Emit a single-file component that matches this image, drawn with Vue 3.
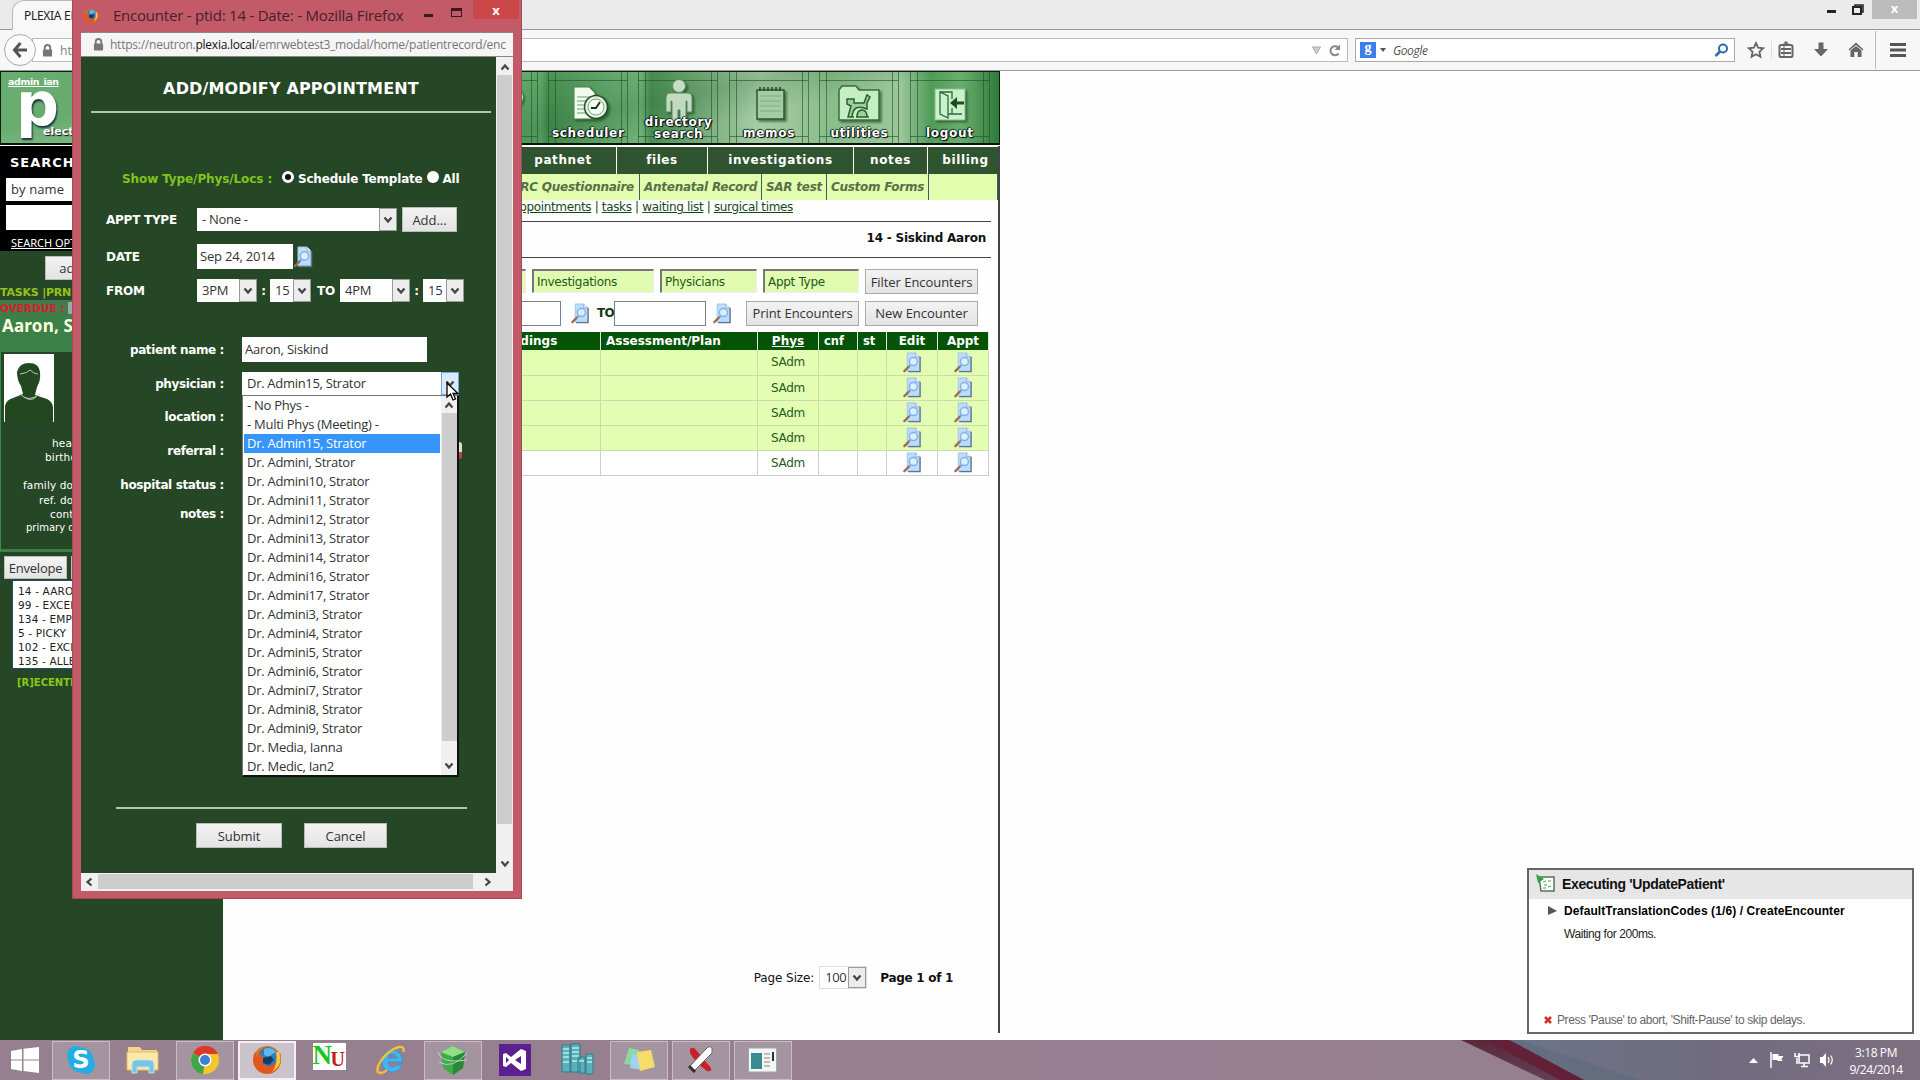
<script setup>
const physicians = [
  '- No Phys -', '- Multi Phys (Meeting) -', 'Dr. Admin15, Strator', 'Dr. Admini, Strator',
  'Dr. Admini10, Strator', 'Dr. Admini11, Strator', 'Dr. Admini12, Strator', 'Dr. Admini13, Strator',
  'Dr. Admini14, Strator', 'Dr. Admini16, Strator', 'Dr. Admini17, Strator', 'Dr. Admini3, Strator',
  'Dr. Admini4, Strator', 'Dr. Admini5, Strator', 'Dr. Admini6, Strator', 'Dr. Admini7, Strator',
  'Dr. Admini8, Strator', 'Dr. Admini9, Strator', 'Dr. Media, Ianna', 'Dr. Medic, Ian2',
]
const patients = ['14 - AARON', '99 - EXCEL', '134 - EMPTY', '5 - PICKY', '102 - EXCEL', '135 - ALLER']
const encounters = [1, 2, 3, 4, 5]
</script>

<template>
  <div class="desktop">
    <svg class="defs" width="0" height="0" aria-hidden="true">
      <symbol id="lookup" viewBox="0 0 20 22">
        <path d="M5 1h9l4 4v15H5z" fill="#bcdcfa" stroke="#a5c4e6" />
        <path d="M14 1v4h4" fill="#f4faff" stroke="#8eadd6" />
        <path d="M18.500 5v15.500H6" fill="none" stroke="#5d7396" stroke-width="1.400" />
        <circle cx="11.500" cy="10" r="4.200" fill="#d8f2fc" stroke="#86aeea" stroke-width="1.500" />
        <path d="M8 14l-2 2" stroke="#7b8fb8" stroke-width="2.200" />
        <path d="M6 16l-4 4" stroke="#a06a4c" stroke-width="2.400" stroke-linecap="round" />
      </symbol>
      <symbol id="chev" viewBox="0 0 10 8">
        <path d="M1.500 1.500L5 5.500l3.500-4" fill="none" stroke="#444" stroke-width="2.200" />
      </symbol>
      <symbol id="lock" viewBox="0 0 12 14">
        <path d="M3 7V4a3 3 0 0 1 6 0v3" fill="none" stroke="#777" stroke-width="2" />
        <rect x="1" y="6" width="10" height="7.500" rx="1" fill="#777" />
      </symbol>
      <symbol id="fox" viewBox="0 0 32 32">
        <circle cx="16" cy="16" r="14" fill="#e8701a" />
        <circle cx="17" cy="13" r="10" fill="#2f7fc0" />
        <path d="M13 5q7-3 12 3l-4 2-3 3-5-2z" fill="#63b6e4" />
        <path d="M29 8q4 15-8 21-12 3-18-8-2-7 1-13l2 5 4-4q0 4 4 5l-3 3q2 6 8 5 8-2 10-14z" fill="#e0561c" />
        <path d="M28 8q5 13-7 20 6-8 4-20z" fill="#f9c53c" />
        <path d="M12 14l8-2 3 4-5 5-6-2z" fill="#163c64" />
      </symbol>
    </svg>

    <!-- main browser window -->
    <div class="browser">
      <div class="tabstrip">
        <div class="tab">PLEXIA EMR</div>
        <div class="winctl">
          <i class="wmin"></i>
          <svg width="12" height="11" viewBox="0 0 12 11"><path d="M3 2.500V1h8v7H9.500" fill="none" stroke="#222" stroke-width="1.500" /><rect x="1" y="3" width="8" height="7" fill="none" stroke="#222" stroke-width="2" /></svg>
          <b>x</b>
        </div>
      </div>
      <div class="toolbar">
        <div class="back">
          <svg width="16" height="16" viewBox="0 0 16 16"><path d="M8.500 1L2.500 8l6 7M3 8h12" fill="none" stroke="#555" stroke-width="3" /></svg>
        </div>
        <div class="url">
          <svg width="11" height="13"><use href="#lock" /></svg>
          <span>https://neutron</span>
          <svg class="tri" width="9" height="9" viewBox="0 0 9 9"><path d="M.500 1h8L4.500 8z" fill="#ccc" stroke="#aaa" /></svg>
          <svg width="13" height="13" viewBox="0 0 13 13"><path d="M10.500 9.500A4.500 4.500 0 1 1 10 3.300" fill="none" stroke="#888" stroke-width="2" /><path d="M12 .500v5.500H6.500z" fill="#888" /></svg>
        </div>
        <div class="search">
          <i class="gicon">g</i><svg width="6" height="4" viewBox="0 0 6 4"><path d="M0 0h6L3 4z" fill="#555" /></svg>
          <em>Google</em>
          <svg width="15" height="15" viewBox="0 0 15 15"><circle cx="9" cy="5.500" r="4" fill="none" stroke="#2a6aac" stroke-width="2" /><path d="M6 8.500L1.500 13" stroke="#2a6aac" stroke-width="2.500" /></svg>
        </div>
        <div class="tools">
          <svg width="18" height="18" viewBox="0 0 18 18"><path d="M9 2l2.100 4.700 5 .600-3.700 3.500 1 5L9 13.300l-4.400 2.500 1-5L1.900 7.300l5-.600z" fill="none" stroke="#666" stroke-width="1.800" /></svg>
          <i class="thin"></i>
          <svg width="16" height="18" viewBox="0 0 16 18"><rect x="1.500" y="4" width="13" height="12" rx="1.500" fill="none" stroke="#666" stroke-width="2" /><path d="M5 3.500h6M6.500 1.500h3M3 8h10M3 12h10" stroke="#666" stroke-width="1.800" /><path d="M6 5v10" stroke="#666" /></svg>
          <svg width="16" height="18" viewBox="0 0 16 18"><path d="M5.500 1.500h5V8H15l-7 7.500L1 8h4.500z" fill="#666" /></svg>
          <svg width="16" height="18" viewBox="0 0 16 18"><path d="M8 1.500l7.500 7-1 1L8 4 1.500 9.500l-1-1z" fill="#666" /><path d="M2.500 9.500L8 5l5.500 4.500v6.500H9.700v-5H6.300v5H2.500z" fill="#666" /></svg>
          <i class="sep"></i>
          <svg width="18" height="18" viewBox="0 0 18 18"><path d="M1 3.500h16M1 9h16M1 14.500h16" stroke="#555" stroke-width="3.200" /></svg>
        </div>
      </div>

      <div class="page">
        <header class="banner">
          <div class="brand"><u>admin_ian</u><b>p</b><small>electronic</small></div>
          <div class="navtiles">
            <div class="tile"><svg width="70" height="56" viewBox="0 0 70 56"><circle cx="50" cy="18" r="7" fill="none" stroke="#e5f8e5" stroke-width="6" /></svg></div>
            <div class="tile">
              <svg width="70" height="56" viewBox="0 0 70 56">
                <path d="M21 8h15l6 6v26H21z" fill="#effcef" stroke="#507c50" />
                <path d="M24 18h14M24 22h12M24 26h9M24 30h9M24 34h9" stroke="#6d9a6d" />
                <circle cx="43" cy="28" r="11.500" fill="#e0f5e0" stroke="#274c27" stroke-width="1.500" />
                <circle cx="43" cy="28" r="8" fill="#f4fff4" stroke="#7fa67f" /><path d="M47 23l-4 6h-5" fill="none" stroke="#183818" stroke-width="2" />
              </svg>
              <span>scheduler</span>
            </div>
            <div class="tile two">
              <svg width="70" height="56" viewBox="0 0 70 56">
                <circle cx="35" cy="7" r="6.500" fill="#c6dcc4" stroke="#5c8c5c" />
                <path d="M26 14h18q4 0 4 4v15h-5V22h-1v22h-6V31h-2v13h-6V22h-1v11h-5V18q0-4 4-4z" fill="#c3d9c2" stroke="#5c8c5c" />
              </svg>
              <span>directory<br>search</span>
            </div>
            <div class="tile">
              <svg width="70" height="56" viewBox="0 0 70 56">
                <path d="M23 11h27v29H23z" fill="#a5cba5" stroke="#2c592c" stroke-width="1.500" />
                <path d="M26 17h21M26 22h21M26 27h21M26 32h21" stroke="#7fae7f" /><path d="M26 8v4M30 8v4M34 8v4M38 8v4M42 8v4M46 8v4" stroke="#234b23" stroke-width="1.500" />
              </svg>
              <span>memos</span>
            </div>
            <div class="tile">
              <svg width="70" height="56" viewBox="0 0 70 56">
                <path d="M15 11l3-4h14l3 4h20v30H15z" fill="#c6eec6" stroke="#3b6c3b" stroke-width="1.500" />
                <path d="M23 20h7v4h10l3-8 3 2-3 6v6q-14-6-15 8h-4l3-11-4-2zM33 38q0-7 5-7t5 7M24 38h6M32 38h13" fill="#9bcf9b" stroke="#2d5f2d" stroke-width="1.500" />
              </svg>
              <span>utilities</span>
            </div>
            <div class="tile">
              <svg width="70" height="56" viewBox="0 0 70 56">
                <rect x="20" y="10" width="30" height="31" fill="#c9f2ca" stroke="#8abb8a" />
                <path d="M25 13l8 4v22l-8-4zM25 13h12v7M37 29v6h-4M37 35h10" fill="none" stroke="#31663a" stroke-width="1.300" />
                <path d="M49 24h-9" stroke="#214a25" stroke-width="3" /><path d="M42 18v12l-7-6z" fill="#214a25" />
              </svg>
              <span>logout</span>
            </div>
          </div>
        </header>

        <div class="body">
          <aside class="side">
            <div class="finder">
              <h4>SEARCH</h4>
              <div class="fin">by name</div>
              <div class="fin blank"></div>
              <u>SEARCH OPTIONS</u>
            </div>
            <div class="addrow"><span class="btn">add new</span></div>
            <div class="tasks">TASKS |PRN.</div>
            <div class="pt">
              <div class="over">OVERDUE : <i></i></div>
              <div class="ptname">Aaron, Siskind</div>
            </div>
            <div class="card">
              <svg class="photo" width="50" height="68" viewBox="0 0 50 68">
                <rect width="50" height="68" fill="#fff" />
                <path d="M1 68V52q1-6 8-8l10-4-2-8q-4-6-4-14 2-9 12-9t11 9q1 8-3 15l-2 8 9 3q8 2 9 9v15z" fill="#23481f" />
                <path d="M16 20q8-1 10-4 4 4 8 4M16 40q8 9 20 0M20 43q7 5 12 0" fill="none" stroke="#b5c8b2" />
              </svg>
              <div class="f f1">health no. :</div>
              <div class="f f2">birthdate :</div>
              <div class="f f3">family doctor :</div>
              <div class="f f4">ref. doctor :</div>
              <div class="f f5">contact :</div>
              <div class="f f6">primary doc :</div>
            </div>
            <div class="envrow"><span class="btn env">Envelope</span><span class="btn env">Label</span></div>
            <ul class="recent"><li v-for="p in patients" :key="p">{{ p }}</li></ul>
            <div class="rec">[R]ECENTLY</div>
          </aside>

          <main class="main">
            <nav class="menu">
              <span class="m1">pathnet</span><span class="m2">files</span><span class="m3">investigations</span><span class="m4">notes</span><span class="m5">billing</span>
            </nav>
            <nav class="forms">
              <span class="q1">PRC Questionnaire</span><span class="q2">Antenatal Record</span><span class="q3">SAR test</span><span class="q4">Custom Forms</span><span class="q5"></span>
            </nav>
            <div class="links"><u>appointments</u> | <u>tasks</u> | <u>waiting list</u> | <u>surgical times</u></div>
            <div class="who">14 - Siskind Aaron</div>
            <div class="filters">
              <span class="flt fl0"></span>
              <span class="flt fl1">Investigations</span>
              <span class="flt fl2">Physicians</span>
              <span class="flt fl3">Appt Type</span>
              <span class="btn">Filter Encounters</span>
            </div>
            <div class="range">
              <span class="box"></span>
              <svg class="lk a" width="20" height="21"><use href="#lookup" /></svg>
              <b>TO</b><span class="box"></span>
              <svg class="lk b" width="20" height="21"><use href="#lookup" /></svg>
              <span class="btn p">Print Encounters</span>
              <span class="btn">New Encounter</span>
            </div>
            <table class="grid">
              <colgroup><col><col class="c1"><col class="c2"><col class="c3"><col class="c4"><col class="c5"><col class="c6"></colgroup>
              <tbody>
              <tr class="hd"><th class="fd">Findings</th><th class="ap">Assessment/Plan</th><th><u>Phys</u></th><th class="l">cnf</th><th class="l">st</th><th>Edit</th><th>Appt</th></tr>
              <tr v-for="e in encounters" :key="e">
                <td></td><td></td><td>SAdm</td><td></td><td></td>
                <td><svg width="20" height="21"><use href="#lookup" /></svg></td>
                <td><svg width="20" height="21"><use href="#lookup" /></svg></td>
              </tr>
              </tbody>
            </table>
            <div class="pager">Page Size: <span class="sel"><span>100</span><i><svg width="10" height="8"><use href="#chev" /></svg></i></span><b>Page 1 of 1</b></div>
          </main>
        </div>
      </div>
    </div>

    <!-- appointment window -->
    <div class="modal">
      <div class="mtitle">
        <svg width="16" height="16"><use href="#fox" /></svg>
        <span>Encounter - ptid: 14 - Date: - Mozilla Firefox</span>
        <i class="mm"></i><i class="mx"></i><b>x</b>
      </div>
      <div class="murl">
        <svg width="11" height="13"><use href="#lock" /></svg>
        <span>https://neutron.<b>plexia.local</b>/emrwebtest3_modal/home/patientrecord/enc</span>
      </div>
      <div class="mbody">
        <div class="form">
          <h2>ADD/MODIFY APPOINTMENT</h2>
          <div class="show"><em>Show Type/Phys/Locs :</em><i class="radio on"></i><span>Schedule Template</span><i class="radio"></i><span>All</span></div>
          <div class="row r1"><label>APPT TYPE</label><span class="sel w200"><span>- None -</span><i><svg width="10" height="8"><use href="#chev" /></svg></i></span><span class="btn add">Add...</span></div>
          <div class="row r2"><label>DATE</label><span class="inp">Sep 24, 2014</span><svg width="20" height="22"><use href="#lookup" /></svg></div>
          <div class="row r3">
            <label>FROM</label>
            <span class="sel w60"><span>3PM</span><i><svg width="10" height="8"><use href="#chev" /></svg></i></span><b class="colon">:</b>
            <span class="sel w41"><span>15</span><i><svg width="10" height="8"><use href="#chev" /></svg></i></span><b class="to">TO</b>
            <span class="sel w70"><span>4PM</span><i><svg width="10" height="8"><use href="#chev" /></svg></i></span><b class="colon">:</b>
            <span class="sel w41"><span>15</span><i><svg width="10" height="8"><use href="#chev" /></svg></i></span>
          </div>
          <div class="row2 s1"><label>patient name :</label><span class="inp wide">Aaron, Siskind</span></div>
          <div class="row2 s2">
            <label>physician :</label>
            <span class="sel w217"><span>Dr. Admin15, Strator</span><i class="hot"><svg width="10" height="8"><use href="#chev" /></svg></i></span>
            <div class="dropdown">
              <ul><li v-for="(p, n) in physicians" :key="p" :class="{ cur: n === 2 }">{{ p }}</li></ul>
              <div class="dbar"><svg class="up" width="10" height="8"><use href="#chev" /></svg><i></i><svg width="10" height="8"><use href="#chev" /></svg></div>
            </div>
          </div>
          <div class="row2 s3"><label>location :</label></div>
          <div class="row2 s4"><label>referral :</label><i class="edge"></i></div>
          <div class="row2 s5"><label>hospital status :</label></div>
          <div class="row2 s6"><label>notes :</label></div>
          <div class="foot"><span class="btn sub">Submit</span><span class="btn can">Cancel</span></div>
        </div>
        <div class="vbar"><svg class="up" width="10" height="8"><use href="#chev" /></svg><i></i><svg width="10" height="8"><use href="#chev" /></svg></div>
      </div>
      <div class="hbar"><svg class="lf" width="10" height="8"><use href="#chev" /></svg><i></i><svg class="rt" width="10" height="8"><use href="#chev" /></svg></div>
      <svg class="cursor" width="14" height="20" viewBox="0 0 14 20"><path d="M1 1v14l3.500-3L7 18l2.500-1-2.500-5.500h5z" fill="#fff" stroke="#000" stroke-width="1.300" /></svg>
    </div>

    <!-- script runner toast -->
    <div class="toast">
      <div class="th">
        <svg width="20" height="19" viewBox="0 0 20 19"><path d="M3 3h15v14H5z" fill="#f8fff8" stroke="#5d7060" stroke-width="1.500" /><path d="M7 8l3-1M12 7h3M8 11h3M12 13l3-1M7 14h3" stroke="#4aa84f" /><path d="M0 0l8 5-6 4z" fill="#2fa33a" /></svg>
        <b>Executing 'UpdatePatient'</b>
      </div>
      <div class="t1"><svg width="10" height="10" viewBox="0 0 10 10"><path d="M1 0l9 5-9 4z" fill="#555" /></svg><b>DefaultTranslationCodes (1/6) / CreateEncounter</b></div>
      <div class="t2">Waiting for 200ms.</div>
      <div class="t3"><svg width="8" height="8" viewBox="0 0 8 8"><path d="M1 1l6 6M7 1L1 7" stroke="#d0322a" stroke-width="2.600" /></svg><span>Press 'Pause' to abort, 'Shift-Pause' to skip delays.</span></div>
    </div>

    <!-- taskbar -->
    <div class="taskbar">
      <svg class="wall" width="420" height="40" viewBox="0 0 420 40" preserveAspectRatio="none">
        <defs>
          <linearGradient id="sky" x1="0" x2="1"><stop offset="0" stop-color="#6d7489" /><stop offset=".500" stop-color="#706c80" /><stop offset="1" stop-color="#7e6f80" /></linearGradient>
          <linearGradient id="band" x1="0" y1="1" x2=".300" y2="0"><stop offset="0" stop-color="#63485c" /><stop offset="1" stop-color="#5a2638" /></linearGradient>
        </defs>
        <path d="M0 0h420v40H80z" fill="url(#sky)" />
        <path d="M-39 0H10L84 40H45z" fill="url(#band)" />
        <path d="M-15 0H8L84 40H60L10 13z" fill="#642038" />
        <path d="M8 0h12L140 40H84L50 20z" fill="#576978" opacity=".500" />
      </svg>
      <div class="app start"><svg width="28" height="26" viewBox="0 0 28 26"><path d="M0 4l11-2v10.500H0zM12.500 1.700L28 0v12.500H12.500zM0 13.500h11V24L0 22zM12.500 13.500H28V26l-15.500-2z" fill="#fff" /></svg></div>
      <div class="app on"><svg width="32" height="32" viewBox="0 0 32 32"><circle cx="11" cy="11" r="9" fill="#22aee4" /><circle cx="21" cy="21" r="9" fill="#22aee4" /><circle cx="16" cy="16" r="12.500" fill="#22aee4" /><text x="16" y="24" text-anchor="middle" class="skype">S</text></svg></div>
      <div class="app"><svg width="34" height="32" viewBox="0 0 34 32"><path d="M2 3h12l2 3h15v19H2z" fill="#f2d68a" /><path d="M1 8h31v18H1z" fill="#fbe9a9" stroke="#dfbb66" /><path d="M6 20q0-4 4-4h14q4 0 4 4v9h-5v-6H11v6H6z" fill="#79c3e3" stroke="#b8e4f4" /></svg></div>
      <div class="app on"><svg width="30" height="30" viewBox="0 0 30 30"><circle cx="15" cy="15" r="14" fill="#f4c52c" /><path d="M15 15L3 8A14 14 0 0 1 28 9H15z" fill="#d93a2c" /><path d="M15 15l-2 14A14 14 0 0 1 3 8z" fill="#3ea64a" /><circle cx="15" cy="15" r="6.500" fill="#fff" /><circle cx="15" cy="15" r="5" fill="#3b7fd8" /></svg></div>
      <div class="app on lit"><svg width="32" height="32"><use href="#fox" /></svg></div>
      <div class="app"><span class="nu"><b>N</b><i>U</i></span></div>
      <div class="app"><svg width="34" height="34" viewBox="0 0 34 34"><path d="M28.500 19H14q.500 5 4.500 5 2.500 0 3.500-2h6q-2.500 7-10 7-10-1-10-11T18.500 7q10 1 10 12zM14 15h8.500q-.500-4-4-4t-4.500 4z" fill="#45b4ee" fill-rule="evenodd" stroke="#2a8fd0" stroke-width=".700" /><path d="M29.500 9q1.500-6-5-5Q12 8 5 21q-4 9 2 9 3 0 6-3" fill="none" stroke="#f1c03a" stroke-width="2.400" /></svg></div>
      <div class="app on"><svg width="34" height="32" viewBox="0 0 34 32"><path d="M17 2l12 6-2 16-10 7-10-7L5 8z" fill="#3dab48" /><path d="M17 2l12 6-12 5L5 8z" fill="#93dc88" /><path d="M17 13v18l10-7 2-16z" fill="#27893a" /><path d="M2 8q3 12 29 8M3 18q13 8 28-9" fill="none" stroke="#c2d6bf" /></svg></div>
      <div class="app"><svg width="32" height="32" viewBox="0 0 32 32"><rect width="32" height="32" fill="#5c1f8f" /><path d="M22 5l5 2v18l-5 2-10-8-5 4-3-1V10l3-1 5 4zM7 13v6l3-3zM22 12l-6 4 6 4z" fill="#fff" fill-rule="evenodd" /></svg></div>
      <div class="app"><svg width="34" height="34" viewBox="0 0 34 34"><path d="M2 2h8v27H2zM11 1h9v28h-9zM18 14h7v16h-7zM26 11h7v20h-7z" fill="#58b1b8" stroke="#2f7f8a" /><path d="M3 6h6M3 10h6M3 14h6M12 5h7M12 9h7M12 13h7M12 18h5M27 15h5M27 19h5M3 19h6M19 18h5" stroke="#b6ecec" stroke-width="1.500" /></svg></div>
      <div class="app on"><svg width="34" height="30" viewBox="0 0 34 30"><path d="M7 3l10 2-2 15-13-1z" fill="#8fd6a5" /><path d="M10 9l12 2-2 14-12-2z" fill="#9fd3f0" /><path d="M15 7l14-2 4 17-15 4z" fill="#f6dc6a" /></svg></div>
      <div class="app on"><svg width="32" height="32" viewBox="0 0 32 32"><path d="M5 5q3-3 6 1l15 18q1 4-4 3Q10 18 5 9z" fill="#cf1d24" /><path d="M27 4q-3-3-6 1L6 21q-3 4 1 6 3 0 5-3L27 9z" fill="#fff" stroke="#666" /><path d="M4 22l6 6" stroke="#333" stroke-width="3" /></svg></div>
      <div class="app on"><svg width="30" height="26" viewBox="0 0 30 26"><rect x=".500" y="1" width="28" height="24" fill="#f5f5f3" stroke="#9aa" /><rect x="3" y="6" width="11" height="16" fill="#3a8a92" /><path d="M16 7h6M16 11h6M16 15h6M16 19h6" stroke="#aaa" stroke-width="1.500" /><rect x="24" y="5" width="2" height="9" fill="#234" /></svg></div>
      <div class="tray">
        <svg width="9" height="5" viewBox="0 0 9 5"><path d="M0 5h9L4.500 0z" fill="#fff" /></svg>
        <svg class="t-flag" width="14" height="16" viewBox="0 0 14 16"><path d="M1 0v16" stroke="#fff" stroke-width="1.500" /><path d="M2.500 2h6v2h5l-2 3 1 2h-5V8h-5z" fill="#fff" /></svg>
        <svg class="t-net" width="17" height="16" viewBox="0 0 17 16"><rect x="5" y="3" width="10" height="8" fill="none" stroke="#fff" stroke-width="1.500" /><path d="M7 14.500h7M10 11v3M3 6v6M1 1v3.500h4V1" fill="none" stroke="#fff" stroke-width="1.500" /></svg>
        <svg class="t-vol" width="15" height="14" viewBox="0 0 15 14"><path d="M0 4h2.500L6 0v14L2.500 10H0z" fill="#fff" /><path d="M8 4q2 3 0 6M10.500 2.500q3.500 4.500 0 9" fill="none" stroke="#fff" stroke-width="1.200" /></svg>
        <div class="clock">3:18 PM<br>9/24/2014</div>
      </div>
    </div>
  </div>
</template>

<style>
html, body { margin: 0; overflow: hidden; }
</style>

<style scoped>
* { box-sizing: border-box; }
.desktop { position: relative; width: 1920px; height: 1080px; overflow: hidden; background: #fff; display: flex; flex-direction: column; font-family: "DejaVu Sans", sans-serif; font-size: 12px; white-space: nowrap; }
.defs { position: absolute; }
svg { display: block; flex: none; }
ul { list-style: none; margin: 0; padding: 0; }
i { font-style: normal; }

.browser { height: 1040px; display: flex; flex-direction: column; background: #fefefe; isolation: isolate; }
.tabstrip { height: 30px; background: #ebebeb; border-bottom: 1px solid #999; display: flex; justify-content: space-between; }
.tab { width: 140px; height: 30px; margin-left: 12px; padding: 7px 0 0 11px; background: #f8f8f8; border: 1px solid #bbb; border-bottom: 0; border-radius: 12px 12px 0 0; font: 12px/16px "Noto Sans", sans-serif; color: #222; letter-spacing: -.3px; }
.winctl { display: flex; align-items: flex-start; }
.wmin { width: 9px; height: 3px; background: #222; margin: 10px 16px 0 0; }
.winctl svg { margin: 4px 8px 0 0; }
.winctl b { width: 45px; height: 19px; margin-right: 3px; background: #bcbcbc; color: #fff; text-align: center; font: bold 13px/17px "Open Sans", sans-serif; }
.toolbar { height: 41px; background: #f7f7f7; border-bottom: 1px solid #999; display: flex; align-items: center; }
.back { width: 32px; height: 32px; margin-left: 4px; border: 1px solid #aaa; border-radius: 50%; background: #fafafa; display: flex; align-items: center; justify-content: center; flex: none; z-index: 1; }
.url { width: 1316px; height: 24px; margin-left: -4px; padding: 0 6px 0 9px; border: 1px solid #bbb; background: #fff; display: flex; align-items: center; font: 12px "Noto Sans", sans-serif; color: #888; flex: none; }
.url span { margin-left: 7px; }
.tri { margin: 0 7px 0 auto; }
.search { width: 380px; height: 24px; margin-left: 7px; padding: 0 5px 0 4px; border: 1px solid #aaa; background: #fff; display: flex; align-items: center; flex: none; }
.gicon { width: 16px; height: 16px; background: #3f7ee8; color: #fff; font: bold 14px/12px "Liberation Serif", serif; text-align: center; margin-right: 4px; }
.search em { flex: 1; margin-left: 7px; font: italic 12px "Open Sans", sans-serif; color: #555; letter-spacing: -.4px; }
.tools { display: flex; align-items: center; margin-left: 12px; }
.tools svg { margin-right: 19px; }
.tools .thin { width: 1px; height: 18px; background: #ddd; margin: 0 6px 0 -5px; }
.tools svg:first-child { margin-right: 11px; }
.tools .sep { width: 1px; height: 38px; background: #bbb; margin: 0 13px 0 -8px; }

.page { width: 1000px; height: 969px; display: flex; flex-direction: column; }
.banner { height: 74px; border: 1px solid #082408; border-bottom: 2px solid #041404; background: linear-gradient(168deg, transparent 20%, #ffffff26 32%, transparent 45%, #0c4c1c2b 60%, transparent 72%), linear-gradient(90deg, #69ad70 0, #5aa365 540px, #468e50 546px, #71b378 640px, #4a8e52 650px, #a9cda6 760px, #8bbc8b 830px, #9cc69b 900px, #4f9c58 930px, #6aae6f 960px, #2f7b3b 998px); display: flex; justify-content: space-between; flex: none; }
.brand { width: 200px; display: flex; flex-wrap: wrap; align-content: flex-start; color: #fff; }
.brand u { width: 190px; margin: 3px 0 0 7px; font: bold 9.500px/13px "DejaVu Sans", sans-serif; letter-spacing: -.4px; }
.brand b { font: bold 60px/44px "DejaVu Sans", sans-serif; margin: -6px 0 0 15px; width: 46px; height: 50px; text-shadow: 1px 2px 2px #133; }
.brand small { font: bold 11px/14px "DejaVu Sans", sans-serif; margin: 37px 0 0 -19px; text-shadow: 1px 1px 1px #000; }
.navtiles { display: flex; padding-right: 4px; }
.tile { width: 90.4px; height: 71px; display: flex; flex-direction: column; align-items: center; padding-top: 6px; background: linear-gradient(#1d4f2799, #1d4f2799) 5px 0/1px 100% no-repeat, linear-gradient(#1d4f2799, #1d4f2799) 12px 0/1px 100% no-repeat, linear-gradient(#1d4f2799, #1d4f2799) 78px 0/1px 100% no-repeat, linear-gradient(#1d4f2799, #1d4f2799) 84px 0/1px 100% no-repeat, linear-gradient(#1d4f2799, #1d4f2799) 5px 8px/79px 1px no-repeat, linear-gradient(#1d4f2799, #1d4f2799) 5px 64px/79px 1px no-repeat; }
.tile span { margin-top: -9px; font: bold 12px/14px "DejaVu Sans", sans-serif; color: #fff; text-align: center; letter-spacing: .7px; text-shadow: 1px 1px 1px #000, -1px 0 1px #000, 0 -1px 1px #143; z-index: 1; }
.tile.two span { margin-top: -19px; line-height: 12px; }
.tile svg { margin-top: 1px; filter: drop-shadow(2px 2px 1px #1a4a22aa); }

.body { flex: 1; display: flex; }
.side { width: 223px; background: #264726; display: flex; flex-direction: column; color: #fff; overflow: hidden; border-top: 1px solid #fff; }
.finder { height: 105px; background: #000; padding: 9px 0 0 6px; }
.finder h4 { margin: 0 0 7px 4px; font: bold 13px/16px "DejaVu Sans", sans-serif; letter-spacing: 1px; }
.fin { width: 200px; height: 23px; background: #fff; color: #333; font: 13px/22px "Open Sans", sans-serif; padding-left: 5px; margin-bottom: 4px; letter-spacing: .1px; }
.fin.blank { height: 25px; }
.finder u { margin: 5px 0 0 5px; font: 11px/15px "Noto Sans", sans-serif; display: block; }
.btn { display: flex; align-items: center; justify-content: center; background: linear-gradient(#f3f3f3, #e3e3e3); border: 1px solid #bbb; color: #333; font: 13px "Open Sans", sans-serif; letter-spacing: -.05px; }
.addrow { height: 34px; padding: 5px 0 0 45px; display: flex; }
.addrow .btn { width: 80px; height: 24px; }
.tasks { height: 15px; font: bold 11px/15px "DejaVu Sans", sans-serif; color: #94c41c; letter-spacing: -.2px; }
.pt { height: 52px; background: #3b8046; }
.over { height: 16px; font: bold 10.500px/16px "DejaVu Sans", sans-serif; color: #d8202c; letter-spacing: .05px; display: flex; align-items: center; background: #437a4b; }
.over i { width: 30px; height: 12px; background: #9aa; margin-left: 3px; }
.ptname { font: bold 17px/20px "Noto Sans", sans-serif; color: #ffffe0; padding-left: 2px; letter-spacing: .2px; }
.card { height: 200px; border-left: 1px solid #3c8a48; border-bottom: 3px solid #3c8048; padding: 2px 0 0 3px; font: 10.500px/14px "DejaVu Sans", sans-serif; letter-spacing: .15px; flex: none; }
.f { height: 14px; }
.f1 { margin: 14px 0 0 48px; }
.f2 { margin: 0 0 0 41px; }
.f3 { margin: 14px 0 0 19px; }
.f4 { margin: 1px 0 0 35px; }
.f5 { margin: 0 0 0 46px; }
.f6 { margin: 0 0 0 22px; font-size: 10px; letter-spacing: 0; }
.envrow { height: 28px; display: flex; gap: 4px; padding: 4px 0 0 4px; flex: none; }
.env { width: 63px; height: 23px; font-size: 13px; letter-spacing: -.2px; }
.recent { width: 190px; height: 89px; margin-left: 12px; background: #fff; border: 1px solid #24486e; color: #222; font: 10.500px/14px "DejaVu Sans", sans-serif; padding: 3px 0 0 5px; letter-spacing: .15px; flex: none; }
.rec { margin: 7px 0 0 17px; font: bold 10px/14px "DejaVu Sans", sans-serif; color: #8ac81c; }

.main { width: 777px; height: 887px; border-right: 2px solid #444; display: flex; flex-direction: column; margin-top: 1px; }
.menu { height: 28px; background: #315430; border-top: 1px solid #fff; display: flex; justify-content: flex-end; flex: none; font: bold 12px/27px "DejaVu Sans", sans-serif; color: #fff; letter-spacing: .6px; }
.menu span { border-right: 1px solid #fff; text-align: center; }
.m1 { width: 107px; } .m2 { width: 91px; } .m3 { width: 146px; } .m4 { width: 74px; } .menu .m5 { width: 70px; border: 0; padding-left: 5px; }
.forms { height: 26px; background: #e3fdae; display: flex; justify-content: flex-end; flex: none; font: italic bold 12px/26px "DejaVu Sans", sans-serif; color: #567048; letter-spacing: -.25px; }
.forms span { border-right: 1px solid #456; text-align: center; }
.forms .q1 { width: 145px; text-align: right; padding-right: 5px; } .q2 { width: 122px; } .q3 { width: 65px; } .q4 { width: 102px; } .q5 { width: 69px; }
.links { height: 22px; width: 768px; border-bottom: 1px solid #444; padding: 0 198px 0 0; text-align: right; font-size: 12px; line-height: 15px; color: #184818; letter-spacing: -.35px; flex: none; }
.who { height: 36px; width: 768px; border-bottom: 1px solid #444; padding-right: 5px; text-align: right; font: bold 12px/33px "DejaVu Sans", sans-serif; color: #111; flex: none; letter-spacing: -.22px; }
.filters { display: flex; justify-content: flex-end; padding: 11px 20px 0 0; flex: none; }
.flt { height: 24px; background: #e1fbb0; border: 1px solid #eee; border-top: 2px solid #777; border-left: 2px solid #777; font: 12px/23px "DejaVu Sans", sans-serif; color: #1b5a18; padding-left: 3px; margin-right: 6px; letter-spacing: -.3px; }
.fl0 { width: 120px; } .fl1 { width: 122px; } .fl2 { width: 97px; } .fl3 { width: 96px; }
.filters .btn, .range .btn { width: 113px; height: 25px; border-color: #aaa; }
.range { display: flex; align-items: center; justify-content: flex-end; padding: 6px 20px 0 0; height: 32px; flex: none; }
.range .box { width: 92px; height: 25px; border: 1px solid #7a8290; background: #fff; }
.range b { color: #123c12; font-size: 12px; width: 17px; letter-spacing: -.7px; }
.lk.a { margin: 0 7px 0 9px; } .lk.b { margin: 0 14px 0 6px; }
.range .p { margin-right: 6px; }
.grid { width: 766px; border-collapse: collapse; table-layout: fixed; margin-top: 6px; }
.c1 { width: 157px; } .c2 { width: 61px; } .c3 { width: 39px; } .c4 { width: 29px; } .c5 { width: 51px; } .c6 { width: 51px; }
.grid th { height: 18px; background: #045408; color: #fff; font: bold 12px/17px "DejaVu Sans", sans-serif; padding: 0; border-right: 1px solid #dfe8df; }
.grid th.fd { text-align: left; padding-left: 276px; }
.grid th.ap { text-align: left; padding-left: 5px; }
.grid th.l { text-align: left; padding-left: 5px; font-size: 11.500px; }
.grid td { height: 25px; background: #e3fdb2; border: 1px solid #c8dcae; border-top: 0; padding: 0; text-align: center; color: #1c5c1c; font: 12px/24px "DejaVu Sans", sans-serif; letter-spacing: -.3px; }
.grid td svg { margin: 1px auto; }
.grid tr:last-child td { background: #fff; border-color: #ccc; }
.pager { display: flex; align-items: center; justify-content: flex-end; margin: auto 45px 44px 0; font: 12px/22px "DejaVu Sans", sans-serif; color: #111; height: 23px; letter-spacing: -.1px; }
.pager .sel { width: 48px; margin: 0 13px 0 5px; border: 1px solid #ddd; line-height: 21px; }
.pager .sel > span { letter-spacing: -.5px; }
.pager b { letter-spacing: -.3px; }

.sel { display: flex; height: 23px; background: #fff; font: 13px/23px "Open Sans", sans-serif; color: #333; flex: none; }
.sel > span { flex: 1; padding-left: 5px; letter-spacing: -.3px; }
.sel i { width: 18px; background: #ececec; border: 1px solid #999; display: flex; align-items: center; justify-content: center; }
.sel .hot { background: #d8ebfc; border-color: #6fa8e0; }
.inp { height: 25px; width: 96px; background: #fff; color: #333; font: 13px/25px "Open Sans", sans-serif; padding-left: 3px; flex: none; letter-spacing: -.2px; }

.modal { position: absolute; left: 72px; top: 0; width: 450px; height: 899px; background: #c25a68; border: 1px solid #a04a58; border-top: 0; display: flex; flex-direction: column; padding: 0 8px; }
.mtitle { height: 32px; display: flex; align-items: center; padding-left: 2px; color: #47202a; font: 15px/30px "Open Sans", sans-serif; flex: none; }
.mtitle span { margin-left: 14px; width: 300px; letter-spacing: -.22px; height: 32px; }
.mm { width: 9px; height: 3px; background: #3a1a22; margin: -2px 0 0 12px; }
.mx { width: 11px; height: 9px; border: 1px solid #3a1a22; border-top-width: 3px; margin: -8px 0 0 18px; }
.mtitle b { width: 46px; height: 20px; margin: -14px -6px 0 11px; color: #fff; background: #cb4848; font: bold 13px/22px "Open Sans", sans-serif; text-align: center; }
.murl { height: 25px; background: #f5f5f5; border-top: 1px solid #888; border-bottom: 1px solid #888; display: flex; align-items: center; padding-left: 12px; color: #777; font: 12px "Open Sans", sans-serif; letter-spacing: -.24px; flex: none; }
.murl span { margin-left: 6px; }
.murl b { color: #111; font-weight: 400; }
.mbody { height: 816px; display: flex; flex: none; }
.form { width: 415px; background: #264726; color: #fff; display: flex; flex-direction: column; padding-left: 10px; font-weight: bold; letter-spacing: -.25px; }
.form h2 { width: 400px; height: 56px; margin: 0; border-bottom: 2px solid #a8cda0; font: bold 16px/63px "DejaVu Sans", sans-serif; text-align: center; letter-spacing: .15px; flex: none; }
.show { height: 20px; margin: 56px 0 0 31px; display: flex; align-items: center; flex: none; letter-spacing: -.2px; }
.show em { font-style: normal; color: #80c41c; width: 160px; letter-spacing: -.1px; }
.radio { width: 12px; height: 12px; border-radius: 50%; background: #fff; margin: -4px 4px 0 0; flex: none; }
.radio.on { border: 3px solid #fff; background: #111; }
.show span + .radio { margin-left: 4px; }
.row { display: flex; align-items: center; height: 25px; padding-left: 15px; flex: none; }
.row label { width: 91px; }
.r1 { margin-top: 18px; } .r2 { margin-top: 12px; } .r3 { margin-top: 9px; }
.w200 { width: 200px; } .w60 { width: 60px; } .w41 { width: 41px; } .w70 { width: 70px; } .w217 { width: 217px; }
.add { width: 55px; height: 25px; margin-left: 5px; }
.colon { width: 13px; text-align: center; }
.to { width: 29px; text-align: right; padding-right: 5px; }
.row2 { display: flex; align-items: center; height: 25px; flex: none; position: relative; }
.row2 label { width: 133px; text-align: right; margin-right: 18px; letter-spacing: -.38px; }
.inp.wide { width: 185px; }
.s1 { margin-top: 34px; } .s2 { margin-top: 9px; } .s3 { margin-top: 8px; } .s4 { margin-top: 9px; } .s5 { margin-top: 9px; } .s6 { margin-top: 4px; }
.edge { width: 4px; height: 17px; margin-left: 216px; background: linear-gradient(#ddd 60%, #b44 60%); border-radius: 0 3px 3px 0; }
.dropdown { position: absolute; left: 151px; top: 24px; width: 217px; height: 382px; background: #fff; border: 1px solid #777; border-right: 2px solid #111; border-bottom: 2px solid #111; display: flex; z-index: 2; }
.dropdown ul { width: 199px; padding: 0 1px; }
.dropdown li { height: 19px; padding-left: 3px; font: 13px/19px "Open Sans", sans-serif; color: #333; letter-spacing: -.27px; }
.dropdown li.cur { background: #3595fb; color: #fff; }
.dbar, .vbar { width: 16px; background: #f0f0f0; display: flex; flex-direction: column; align-items: center; }
.dbar { padding: 5px 0; }
.dbar i { width: 15px; height: 328px; background: #cdcdcd; margin: 4px 0 auto; }
.vbar { width: 17px; padding: 6px 0 5px; }
.vbar i { width: 15px; height: 749px; background: #cdcdcd; margin: 4px 0 auto; }
.up { transform: rotate(180deg); } .lf { transform: rotate(90deg); } .rt { transform: rotate(-90deg); }
.foot { width: 351px; margin: 281px 0 0 25px; border-top: 2px solid #a8cda0; display: flex; padding: 14px 0 0 80px; gap: 22px; font-weight: 400; }
.sub { width: 86px; height: 25px; } .can { width: 83px; height: 25px; }
.hbar { height: 18px; width: 432px; background: #f0f0f0; display: flex; align-items: center; padding: 0 20px 1px 3px; flex: none; }
.hbar i { width: 375px; height: 15px; background: #cdcdcd; margin: 0 auto 0 4px; }
.cursor { position: absolute; left: 373px; top: 382px; z-index: 5; }

.toast { position: absolute; left: 1527px; top: 868px; width: 387px; height: 166px; border: 2px solid #666; background: #fff; font-family: "Liberation Sans", sans-serif; display: flex; flex-direction: column; color: #222; }
.th { height: 29px; background: #e6e6e6; display: flex; align-items: center; padding: 0 0 2px 7px; }
.th b { margin-left: 6px; font-size: 14px; letter-spacing: -.35px; color: #111; }
.t1 { display: flex; align-items: center; height: 24px; padding-left: 18px; color: #000; }
.t1 b { margin-left: 7px; font-size: 12px; letter-spacing: .1px; }
.t2 { height: 22px; line-height: 22px; padding-left: 35px; font-size: 12px; letter-spacing: -.42px; }
.t3 { margin-top: auto; height: 25px; display: flex; align-items: center; padding-left: 15px; font-size: 12px; color: #666; }
.t3 span { margin-left: 5px; letter-spacing: -.4px; }

.taskbar { position: relative; height: 40px; background: linear-gradient(90deg, #96808f, #977e90 60%, #94818f); display: flex; align-items: center; }
.wall { position: absolute; left: 1500px; top: 0; overflow: visible; }
.app { width: 58px; height: 39px; margin-right: 4px; display: flex; align-items: center; justify-content: center; flex: none; }
.app.start { width: 52px; margin: 0; }
.app.start svg { margin-left: -2px; }
.app.on { border: 1px solid #c9bcc6; background: #a394a0; }
.app.lit { background: #cbc3ca; border: 2px solid #f4f0f4; }
.skype { font: bold 24px "DejaVu Sans", sans-serif; fill: #fff; }
.nu { width: 33px; height: 27px; margin-top: -7px; background: #fff; display: flex; font-family: "Liberation Serif", serif; }
.nu b { font-size: 27px; line-height: 24px; color: #14c81c; width: 18px; }
.nu i { font-weight: bold; font-size: 20px; line-height: 32px; color: #c81c1c; }
.tray { position: relative; margin-left: auto; display: flex; align-items: center; padding-right: 16px; color: #fff; }
.t-flag { margin-left: 12px; } .t-net { margin-left: 10px; } .t-vol { margin-left: 9px; }
.clock { margin-left: 13px; width: 56px; text-align: center; font: 12px/17px "Open Sans", sans-serif; letter-spacing: -.4px; padding-top: 1px; }
</style>
